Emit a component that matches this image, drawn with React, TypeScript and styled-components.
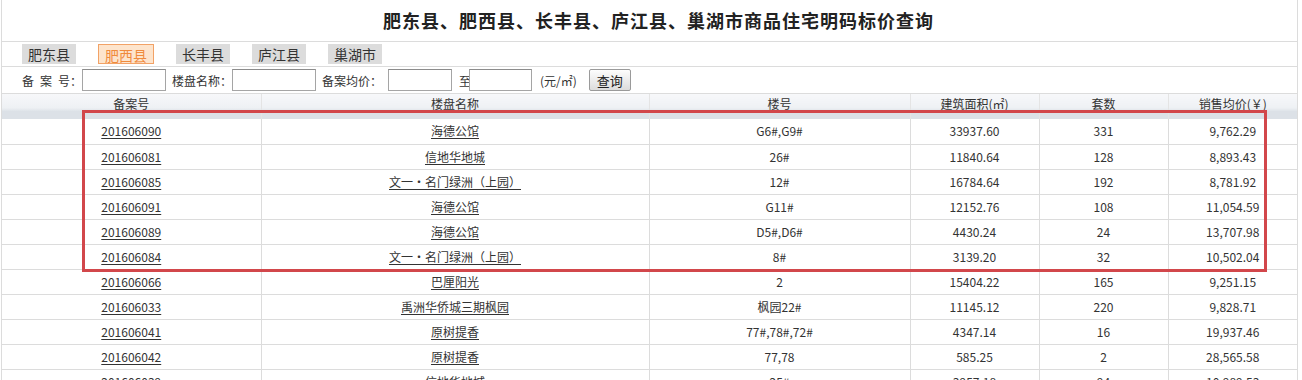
import React from "react";
import styled, { createGlobalStyle } from "styled-components";

const Global = createGlobalStyle`
  html, body { margin: 0; padding: 0; background: #fff; }
  body {
    font-family: "Noto Sans CJK SC", "Liberation Sans", sans-serif;
    font-size: 12px;
    color: #333;
  }
`;

const Frame = styled.div`
  position: relative;
  margin-left: 1px;
  width: 1295px;
  border-left: 1px solid #dcdcdc;
  border-right: 1px solid #dcdcdc;
`;

const TitleBar = styled.div`
  height: 41px;
  border-bottom: 1px solid #dcdcdc;
  display: flex;
  align-items: center;
  justify-content: center;
`;

const Title = styled.h1`
  margin: 0 0 2px 18px;
  font-size: 18px;
  font-weight: 700;
  letter-spacing: 1px;
  color: #222;
`;

const TabBar = styled.div`
  height: 24px;
  border-bottom: 1px solid #dcdcdc;
  display: flex;
  align-items: center;
  gap: 22px;
  padding-left: 20px;
`;

const Tab = styled.span<{ $active?: boolean }>`
  box-sizing: border-box;
  height: 20px;
  line-height: 20px;
  font-size: 14px;
  padding: 0 6px;
  background: ${(p) => (p.$active ? "#fde4cc" : "#dcdcdc")};
  color: ${(p) => (p.$active ? "#f08a3c" : "#333")};
  border: ${(p) => (p.$active ? "1px solid #f2a266" : "none")};
  width: ${(p) => (p.$active ? "56px" : "auto")};
  text-align: center;
`;

const SearchBar = styled.div`
  height: 26px;
  border-bottom: 1px solid #dcdcdc;
  display: flex;
  align-items: center;
  padding-left: 20px;
`;

const Label = styled.span<{ $w: number; $ml?: number }>`
  width: ${(p) => p.$w}px;
  margin-left: ${(p) => p.$ml ?? 0}px;
  white-space: pre;
  font-size: 12px;
  color: #333;
`;

const Input = styled.input<{ $w: number }>`
  box-sizing: border-box;
  width: ${(p) => p.$w}px;
  height: 22px;
  margin: 0;
  padding: 0 2px;
  border: 1px solid #a5a5a5;
  border-top-color: #8c8c8c;
  background: #fff;
`;

const Unit = styled.span`
  margin-left: 8px;
  font-size: 12px;
  color: #333;
`;

const Button = styled.button`
  box-sizing: border-box;
  margin-left: 12px;
  width: 42px;
  height: 22px;
  padding: 0;
  font-family: inherit;
  font-size: 13px;
  color: #222;
  border: 1px solid #9a9a9a;
  border-radius: 2px;
  background: linear-gradient(#fdfdfd, #dcdcdc);
`;

const Table = styled.table`
  width: 1295px;
  border-collapse: collapse;
  table-layout: fixed;
`;

const HeadRow = styled.tr`
  height: 25px;
`;

const HeadCell = styled.th`
  height: 20px;
  padding: 0 0 5px 0;
  font-weight: 400;
  font-size: 12px;
  line-height: 20px;
  color: #333;
  text-align: center;
  vertical-align: middle;
  background: linear-gradient(#f7f8fa 0%, #eef1f4 55%, #dce1e7 70%, #dce1e7 100%);
  border-left: 1px solid #e4e4e4;
  &:first-child { border-left: none; }
`;

const Row = styled.tr`
  height: 25px;
`;

const Cell = styled.td`
  height: 24px;
  padding: 0;
  font-size: 12px;
  line-height: 16px;
  color: #333;
  text-align: center;
  vertical-align: middle;
  border-bottom: 1px solid #dcdcdc;
  border-left: 1px solid #dcdcdc;
  &:first-child { border-left: none; }
`;

const Link = styled.a`
  color: #333;
  text-decoration: underline;
  text-underline-offset: 2px;
  cursor: pointer;
`;

const Highlight = styled.div`
  position: absolute;
  left: 80px;
  top: 110px;
  width: 1185px;
  height: 162px;
  box-sizing: border-box;
  border: 3px solid #d2474b;
  pointer-events: none;
`;

const tabs = ["肥东县", "肥西县", "长丰县", "庐江县", "巢湖市"];

const headers = ["备案号", "楼盘名称", "楼号", "建筑面积(㎡)", "套数", "销售均价(￥)"];
const colWidths = [259, 388, 261, 129, 129, 129];

const rows: string[][] = [
  ["201606090", "海德公馆", "G6#,G9#", "33937.60", "331", "9,762.29"],
  ["201606081", "信地华地城", "26#", "11840.64", "128", "8,893.43"],
  ["201606085", "文一・名门绿洲（上园）", "12#", "16784.64", "192", "8,781.92"],
  ["201606091", "海德公馆", "G11#", "12152.76", "108", "11,054.59"],
  ["201606089", "海德公馆", "D5#,D6#", "4430.24", "24", "13,707.98"],
  ["201606084", "文一・名门绿洲（上园）", "8#", "3139.20", "32", "10,502.04"],
  ["201606066", "巴厘阳光", "2", "15404.22", "165", "9,251.15"],
  ["201606033", "禹洲华侨城三期枫园", "枫园22#", "11145.12", "220", "9,828.71"],
  ["201606041", "原树提香", "77#,78#,72#", "4347.14", "16", "19,937.46"],
  ["201606042", "原树提香", "77,78", "585.25", "2", "28,565.58"],
  ["201606039", "信地华地城", "25#", "3957.18", "94", "10,989.53"],
];

export default function App() {
  return (
    <>
      <Global />
      <Frame>
        <TitleBar>
          <Title>肥东县、肥西县、长丰县、庐江县、巢湖市商品住宅明码标价查询</Title>
        </TitleBar>
        <TabBar>
          {tabs.map((t) => (
            <Tab key={t} $active={t === "肥西县"}>
              {t}
            </Tab>
          ))}
        </TabBar>
        <SearchBar>
          <Label $w={60}>{"备\u2002案\u2002号："}</Label>
          <Input $w={84} />
          <Label $w={60} $ml={6}>楼盘名称：</Label>
          <Input $w={84} />
          <Label $w={66} $ml={6}>备案均价：</Label>
          <Input $w={64} />
          <Label $w={10} $ml={7}>至</Label>
          <Input $w={63} />
          <Unit>(元/㎡)</Unit>
          <Button>查询</Button>
        </SearchBar>
        <Table>
          <colgroup>
            {colWidths.map((w, i) => (
              <col key={i} style={{ width: w }} />
            ))}
          </colgroup>
          <thead>
            <HeadRow>
              {headers.map((h) => (
                <HeadCell key={h}>{h}</HeadCell>
              ))}
            </HeadRow>
          </thead>
          <tbody>
            {rows.map((r, i) => (
              <Row key={i}>
                <Cell>
                  <Link>{r[0]}</Link>
                </Cell>
                <Cell>
                  <Link>{r[1]}</Link>
                </Cell>
                <Cell>{r[2]}</Cell>
                <Cell>{r[3]}</Cell>
                <Cell>{r[4]}</Cell>
                <Cell>{r[5]}</Cell>
              </Row>
            ))}
          </tbody>
        </Table>
        <Highlight />
      </Frame>
    </>
  );
}
